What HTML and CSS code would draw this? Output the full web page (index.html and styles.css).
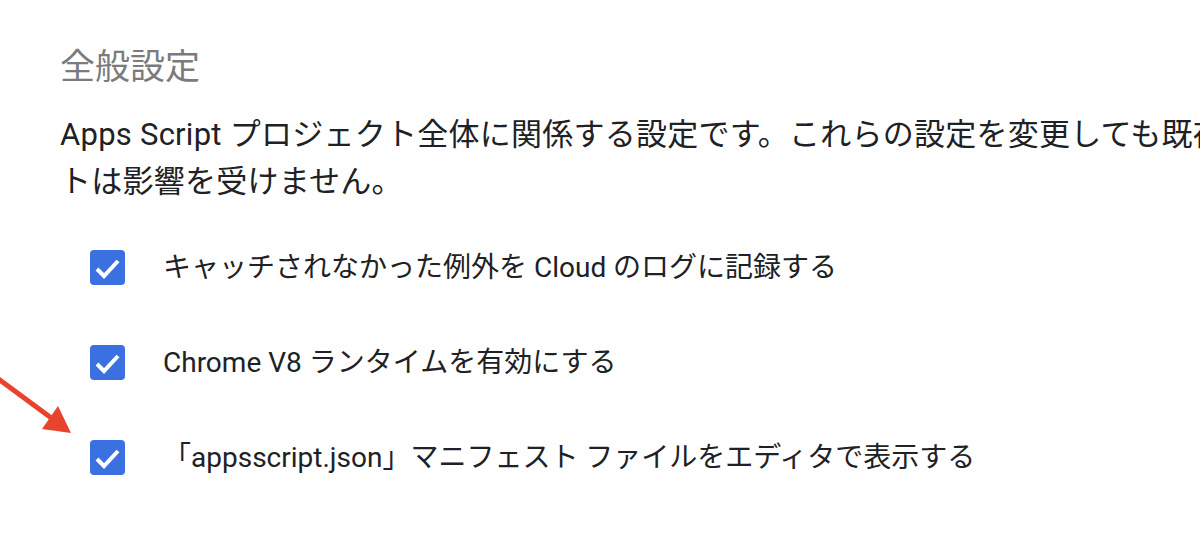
FILE: index.html
```html
<!DOCTYPE html>
<html lang="ja">
<head>
<meta charset="utf-8">
<link rel="stylesheet" href="styles.css">
</head>
<body>
<main class="page">
  <h1 class="title">全般設定</h1>
  <p class="desc">Apps Script プロジェクト全体に関係する設定です。これらの設定を変更しても既存のスクリプトは影響を受けません。</p>
  <ul class="options">
    <li class="option">
      <span class="box"><svg viewBox="0 0 35 35" width="35" height="35"><polyline points="7,19 14,26 28,11" fill="none" stroke="#fff" stroke-width="4"/></svg></span>
      <span class="label">キャッチされなかった例外を Cloud のログに記録する</span>
    </li>
    <li class="option">
      <span class="box"><svg viewBox="0 0 35 35" width="35" height="35"><polyline points="7,19 14,26 28,11" fill="none" stroke="#fff" stroke-width="4"/></svg></span>
      <span class="label">Chrome V8 ランタイムを有効にする</span>
    </li>
    <li class="option">
      <span class="box"><svg viewBox="0 0 35 35" width="35" height="35"><polyline points="7,19 14,26 28,11" fill="none" stroke="#fff" stroke-width="4"/></svg></span>
      <span class="label">「appsscript.json」マニフェスト ファイルをエディタで表示する</span>
    </li>
  </ul>
  <svg class="arrow" viewBox="0 0 80 80" width="80" height="80">
    <line x1="-10" y1="12.7" x2="52" y2="58.6" stroke="#e8432d" stroke-width="5"/>
    <polygon points="71,73 42,69 58,46" fill="#e8432d"/>
  </svg>
</main>
</body>
</html>
```
FILE: styles.css
```css
html, body {
  margin: 0;
  padding: 0;
  overflow: hidden;
  background: #fff;
}
.page {
  position: relative;
  width: 1500px;
  height: 550px;
  padding: 48px 0 0 60px;
  box-sizing: border-box;
  font-family: Roboto, "Noto Sans CJK JP", sans-serif;
  color: #202124;
}
.title {
  margin: 0;
  font-size: 35px;
  line-height: 40px;
  font-weight: 400;
  color: #7b7b7b;
}
.desc {
  margin: 23px 0 0;
  width: 1340px;
  font-size: 31px;
  line-height: 47px;
  letter-spacing: 0.25px;
}
.options {
  list-style: none;
  margin: 15px 0 0;
  padding: 0 0 0 30px;
}
.option {
  display: flex;
  align-items: center;
  gap: 38px;
  height: 95px;
}
.box {
  display: flex;
  width: 35px;
  height: 35px;
  border-radius: 4px;
  background: #3b70e0;
  flex: none;
}
.label {
  font-size: 28px;
  line-height: 40px;
}
.arrow {
  position: absolute;
  left: 0;
  top: 360px;
}
```
